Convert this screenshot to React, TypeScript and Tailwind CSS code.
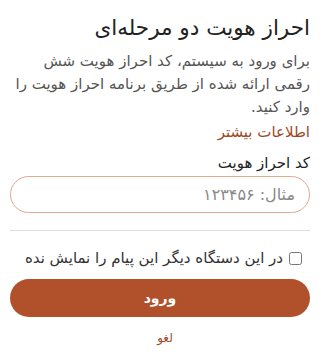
export default function App() {
  return (
    <div
      dir="rtl"
      className="w-[330px] h-[352px] bg-white pr-[20px] pl-[10px] pt-[14px] text-[#222]"
      style={{ fontFamily: '"DejaVu Sans", sans-serif' }}
    >
      <h1 className="text-[21.5px] leading-[28px] font-normal text-[#222]">احراز هویت دو مرحله‌ای</h1>
      <p className="mt-[8px] text-[15px] leading-[23px] text-[#555]">
        برای ورود به سیستم، کد احراز هویت شش رقمی ارائه شده از طریق برنامه احراز هویت را وارد کنید.
      </p>
      <a className="block mt-[2px] text-[15px] leading-[23px] text-[#9c4a26]" href="#">
        اطلاعات بیشتر
      </a>
      <label className="block mt-[8px] text-[15px] leading-[23px] text-[#222]">کد احراز هویت</label>
      <input
        type="text"
        placeholder="مثال: ۱۲۳۴۵۶"
        className="mt-[1px] w-full h-[37px] rounded-full border border-[#e0a88e] px-[14px] text-[16px] text-[#333] placeholder:text-[#888] outline-none"
      />
      <hr className="mt-[17px] border-t border-[#ddd]" />
      <label className="mt-[17px] flex items-center gap-[6px] text-[15px] leading-[20px] text-[#333]">
        <input type="checkbox" className="mr-[8px] w-[13px] h-[13px]" />
        <span>در این دستگاه دیگر این پیام را نمایش نده</span>
      </label>
      <button className="mt-[11px] w-full h-[38px] rounded-full bg-[#b1512c] text-white text-[14px] font-bold">
        ورود
      </button>
      <div className="mt-[13px] -ml-[10px] -mr-[20px] text-center text-[12px] leading-[16px] text-[#9c4a26]">
        <a href="#">لغو</a>
      </div>
    </div>
  );
}
